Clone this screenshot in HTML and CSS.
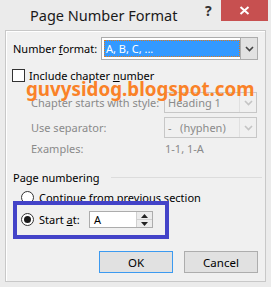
FILE: index.html
```html
<!DOCTYPE html>
<html lang="en">
<head>
    <meta charset="UTF-8">
    <title>Page Number Format</title>
    <link rel="stylesheet" href="styles.css">
</head>
<body>
    <div class="window">
        <div class="titlebar">
            <span class="title">Page Number Format</span>
            <span class="help">?</span>
            <span class="close">
                <svg width="11" height="9" viewBox="0 0 11 9"><path d="M1.5 1 L9.5 8 M9.5 1 L1.5 8" stroke="#fff" stroke-width="2"/></svg>
            </span>
        </div>

        <div class="panel">
            <!-- number format -->
            <div class="row row-format">
                <span class="label">Number <u>f</u>ormat:</span>
                <div class="select select-main">
                    <span class="select-value"><span class="focus">A, B, C, ...</span></span>
                    <span class="select-arrow">
                        <svg width="9" height="6" viewBox="0 0 9 6"><path d="M1 1 L4.5 4.5 L8 1" fill="none" stroke="#444" stroke-width="1.6"/></svg>
                    </span>
                </div>
            </div>

            <!-- chapter -->
            <div class="row row-check">
                <span class="checkbox"></span>
                <span class="label">Include chapter <u>n</u>umber</span>
            </div>
            <div class="row row-sub row-chapter">
                <span class="label muted">Chapter starts with style:</span>
                <div class="select select-off">
                    <span class="select-value">Heading 1</span>
                    <span class="select-arrow">
                        <svg width="9" height="6" viewBox="0 0 9 6"><path d="M1 1 L4.5 4.5 L8 1" fill="none" stroke="#c4c4c4" stroke-width="1.6"/></svg>
                    </span>
                </div>
            </div>
            <div class="row row-sub row-sep">
                <span class="label muted">Use separator:</span>
                <div class="select select-off">
                    <span class="select-value">-&nbsp;&nbsp;&nbsp;(hyphen)</span>
                    <span class="select-arrow">
                        <svg width="9" height="6" viewBox="0 0 9 6"><path d="M1 1 L4.5 4.5 L8 1" fill="none" stroke="#c4c4c4" stroke-width="1.6"/></svg>
                    </span>
                </div>
            </div>
            <div class="row row-sub row-examples">
                <span class="label muted">Examples:</span>
                <span class="examples muted">1-1, 1-A</span>
            </div>

            <!-- page numbering -->
            <div class="row row-group">
                <span class="label">Page numbering</span>
                <span class="group-line"></span>
            </div>
            <div class="row row-radio row-continue">
                <span class="radio"></span>
                <span class="label">Continue from previous section</span>
            </div>
            <div class="row row-radio row-start">
                <span class="radio checked"></span>
                <span class="label label-start">Start <u>a</u>t:</span>
                <div class="spin">
                    <span class="spin-value">A</span>
                    <span class="spin-buttons">
                        <span class="spin-btn"><svg width="7" height="4" viewBox="0 0 7 4"><path d="M0 4 L3.5 0 L7 4 Z" fill="#222"/></svg></span>
                        <span class="spin-btn"><svg width="7" height="4" viewBox="0 0 7 4"><path d="M0 0 L3.5 4 L7 0 Z" fill="#222"/></svg></span>
                    </span>
                </div>
            </div>

            <div class="row row-buttons">
                <button class="btn btn-default">OK</button>
                <button class="btn">Cancel</button>
            </div>

            <div class="watermark">guvysidog.blogspot.com</div>
            <div class="highlight"></div>
        </div>
    </div>
</body>
</html>
```

FILE: styles.css
```css
body {
    margin: 0;
    padding: 0;
    font-family: "Noto Sans", "Open Sans", sans-serif;
    font-size: 11px;
    color: #000;
    background-color: #ebebeb;
}
.window {
    width: 271px;
    height: 287px;
    background-color: #ebebeb;
}
.titlebar {
    height: 30px;
    position: relative;
}
.title {
    position: absolute;
    left: 30px;
    top: 5px;
    font-size: 14.5px;
    color: #1a1a1a;
}
.help {
    position: absolute;
    left: 205px;
    top: 1px;
    font-size: 14px;
    font-weight: bold;
    color: #333;
}
.close {
    position: absolute;
    left: 221px;
    top: 0;
    width: 47px;
    height: 21px;
    background-color: #c75050;
    display: flex;
    align-items: center;
    justify-content: center;
}
.panel {
    position: relative;
    margin: 0 5px;
    height: 252px;
    border: 1px solid #c8c8c8;
    box-shadow: inset 1px 1px 0 #fff;
    background-color: #f0f0f0;
    padding: 6px 7px 0 7px;
    box-sizing: border-box;
}
.row {
    display: flex;
    align-items: center;
}
.label {
    white-space: nowrap;
}
.muted {
    color: #8a8a8a;
}
u {
    text-decoration-thickness: 1px;
    text-underline-offset: 1px;
}
.row-format {
    height: 23px;
    justify-content: space-between;
}
.select {
    display: flex;
    box-sizing: border-box;
    height: 100%;
    border: 1px solid #acacac;
}
.select-main {
    width: 157px;
    background-color: #fff;
    padding: 2px 0 2px 2px;
}
.select-value {
    flex: 1;
    display: flex;
    align-items: center;
    padding-left: 3px;
}
.select-main .select-value {
    background-color: #3399ff;
    padding-left: 0;
}
.focus {
    flex: 1;
    height: 100%;
    box-sizing: border-box;
    border: 1px dotted #e07a1a;
    color: #fff;
    display: flex;
    align-items: center;
    padding-left: 1px;
}
.select-arrow {
    width: 16px;
    display: flex;
    align-items: center;
    justify-content: center;
}
.select-main .select-arrow {
    margin: -2px 0;
    background-color: #e2e2e2;
    border-left: 1px solid #acacac;
    width: 16px;
}
.select-off {
    width: 93px;
    margin-left: auto;
    border-color: #c7c7c7;
    color: #8a8a8a;
    background-color: #f0f0f0;
}
.select-off .select-arrow {
    border-left: 1px solid #e0e0e0;
}
.row-check {
    height: 14px;
    margin-top: 8px;
}
.checkbox {
    width: 13px;
    height: 13px;
    box-sizing: border-box;
    border: 1px solid #333;
    background-color: #fff;
    margin-left: -1px;
    margin-right: 4px;
}
.row-sub {
    padding-left: 18px;
    padding-right: 1px;
}
.row-chapter {
    height: 21px;
    margin-top: 10px;
}
.row-sep {
    height: 21px;
    margin-top: 4px;
}
.row-examples {
    height: 16px;
    margin-top: 2px;
}
.examples {
    margin-left: auto;
    width: 92px;
}
.row-group {
    height: 16px;
    margin-top: 13px;
}
.group-line {
    flex: 1;
    height: 1px;
    background-color: #dcdcdc;
    margin-left: 12px;
    margin-right: -4px;
}
.row-radio {
    padding-left: 8px;
}
.radio {
    width: 13px;
    height: 13px;
    box-sizing: border-box;
    border: 1px solid #333;
    border-radius: 50%;
    background-color: #fff;
    margin-right: 5px;
    position: relative;
}
.radio.checked::after {
    content: "";
    position: absolute;
    left: 2px;
    top: 2px;
    width: 7px;
    height: 7px;
    border-radius: 50%;
    background-color: #1a1a1a;
}
.row-continue {
    height: 16px;
    margin-top: 4px;
}
.row-start {
    height: 17px;
    margin-top: 6px;
}
.label-start {
    width: 50px;
}
.spin {
    width: 64px;
    height: 17px;
    box-sizing: border-box;
    border: 1px solid #acacac;
    background-color: #fff;
    display: flex;
}
.spin-value {
    flex: 1;
    padding-left: 4px;
    line-height: 15px;
}
.spin-buttons {
    width: 15px;
    display: flex;
    flex-direction: column;
    border-left: 1px solid #d0d0d0;
}
.spin-btn {
    flex: 1;
    display: flex;
    align-items: center;
    justify-content: center;
    background-color: #ececec;
}
.spin-btn + .spin-btn {
    border-top: 1px solid #d0d0d0;
}
.row-buttons {
    height: 22px;
    margin-top: 23px;
    justify-content: flex-end;
    gap: 11px;
    padding-right: 0;
}
.btn {
    width: 74px;
    height: 22px;
    box-sizing: border-box;
    border: 1px solid #adadad;
    background-color: #e1e1e1;
    font-family: inherit;
    font-size: 11.5px;
    color: #000;
    padding: 0;
}
.btn-default {
    border-color: #3c9af0;
}
.watermark {
    position: absolute;
    left: 20px;
    top: 45px;
    font-size: 18.8px;
    font-weight: bold;
    color: #fa8228;
    white-space: nowrap;
}
.highlight {
    position: absolute;
    left: 7px;
    top: 170px;
    width: 156px;
    height: 38px;
    box-sizing: border-box;
    border: 4px solid #4343c8;
}
```
